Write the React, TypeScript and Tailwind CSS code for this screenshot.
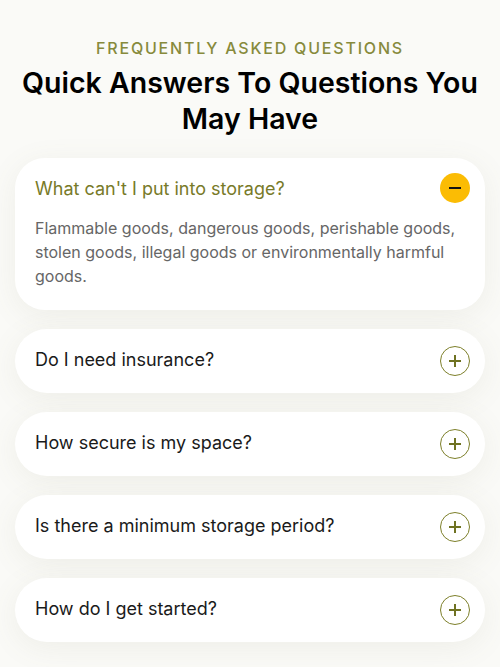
import React from 'react';

const faqs = [
  {
    q: "What can't I put into storage?",
    a: 'Flammable goods, dangerous goods, perishable goods, stolen goods, illegal goods or environmentally harmful goods.',
    open: true,
  },
  { q: 'Do I need insurance?' },
  { q: 'How secure is my space?' },
  { q: 'Is there a minimum storage period?' },
  { q: 'How do I get started?' },
];

const PlusIcon = () => (
  <span className="flex-shrink-0 w-[30px] h-[30px] rounded-full border border-[#7d7f2a] flex items-center justify-center">
    <svg width="16" height="16" viewBox="0 0 16 16">
      <path d="M8 2v12M2 8h12" stroke="#6f7222" strokeWidth="2" />
    </svg>
  </span>
);

const MinusIcon = () => (
  <span className="flex-shrink-0 w-[30px] h-[30px] rounded-full bg-[#fbbc04] flex items-center justify-center">
    <svg width="14" height="4" viewBox="0 0 14 4">
      <path d="M1 2h12" stroke="#111" strokeWidth="2" />
    </svg>
  </span>
);

const App: React.FC = () => {
  return (
    <div className="min-h-[667px] bg-[#fafaf7] font-['Inter',sans-serif] px-[15px] pt-[38px] pb-6">
      <p className="text-center text-[16px] font-medium tracking-[1.8px] text-[#878a3c] leading-5">FREQUENTLY ASKED QUESTIONS</p>
      <h2 className="-mx-[10px] text-center text-[28.5px] font-semibold leading-[36px] text-black mt-[7px] mb-[21px]">
        Quick Answers To Questions You May Have
      </h2>
      <div className="flex flex-col gap-[19px]">
        {faqs.map((f) =>
          f.open ? (
            <div key={f.q} className="bg-white rounded-[30px] pl-5 pr-[15px] pt-[15px] pb-[22px] shadow-[0_6px_30px_rgba(120,120,90,0.09)]">
              <div className="flex items-center justify-between">
                <span className="text-[18px] text-[#787a28]">{f.q}</span>
                <MinusIcon />
              </div>
              <p className="mt-[13px] pr-[5px] text-[16px] leading-6 text-[#666]">{f.a}</p>
            </div>
          ) : (
            <div key={f.q} className="bg-white rounded-[32px] pl-5 pr-[15px] py-[17px] flex items-center justify-between shadow-[0_6px_30px_rgba(120,120,90,0.09)]">
              <span className="text-[18px] text-[#1a1a1a] -mt-[4px]">{f.q}</span>
              <PlusIcon />
            </div>
          )
        )}
      </div>
    </div>
  );
};

export default App;
